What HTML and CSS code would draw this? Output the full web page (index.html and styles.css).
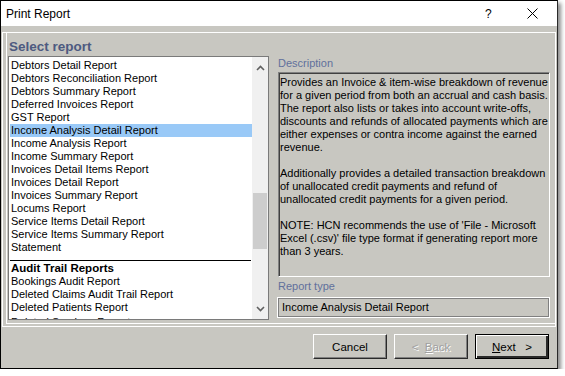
FILE: index.html
```html
<!DOCTYPE html>
<html lang="en">
<head>
    <meta charset="UTF-8">
    <title>Print Report</title>
    <link rel="stylesheet" href="styles.css">
</head>
<body>
    <div class="window">
        <div class="titlebar">
            <span class="title">Print Report</span>
            <span class="help">?</span>
            <span class="close">
                <svg width="11" height="11" viewBox="0 0 11 11"><path d="M0.5 0.5 L10.5 10.5 M10.5 0.5 L0.5 10.5" stroke="#000" stroke-width="1" fill="none"/></svg>
            </span>
        </div>
        <div class="main">
            <div class="panel">
                <div class="left">
                    <h2 class="heading">Select report</h2>
                    <div class="listbox">
                        <ul class="items">
                            <li>Debtors Detail Report</li>
                            <li>Debtors Reconciliation Report</li>
                            <li>Debtors Summary Report</li>
                            <li>Deferred Invoices Report</li>
                            <li>GST Report</li>
                            <li class="selected">Income Analysis Detail Report</li>
                            <li>Income Analysis Report</li>
                            <li>Income Summary Report</li>
                            <li>Invoices Detail Items Report</li>
                            <li>Invoices Detail Report</li>
                            <li>Invoices Summary Report</li>
                            <li>Locums Report</li>
                            <li>Service Items Detail Report</li>
                            <li>Service Items Summary Report</li>
                            <li>Statement</li>
                            <li class="separator"></li>
                            <li class="group">Audit Trail Reports</li>
                            <li>Bookings Audit Report</li>
                            <li>Deleted Claims Audit Trail Report</li>
                            <li>Deleted Patients Report</li>
                            <li class="cut">Deleted Services Report</li>
                        </ul>
                        <div class="scrollbar">
                            <span class="arrow">
                                <svg width="9" height="6" viewBox="0 0 9 6"><path d="M1 5 L4.5 1.5 L8 5" stroke="#606060" stroke-width="1.6" fill="none"/></svg>
                            </span>
                            <div class="track">
                                <div class="thumb"></div>
                            </div>
                            <span class="arrow">
                                <svg width="9" height="6" viewBox="0 0 9 6"><path d="M1 1 L4.5 4.5 L8 1" stroke="#606060" stroke-width="1.6" fill="none"/></svg>
                            </span>
                        </div>
                    </div>
                </div>
                <div class="right">
                    <div class="label label-desc">Description</div>
                    <div class="description">
                        Provides an Invoice &amp; item-wise breakdown of revenue<br>
                        for a given period from both an accrual and cash basis.<br>
                        The report also lists or takes into account write-offs,<br>
                        discounts and refunds of allocated payments which are<br>
                        either expenses or contra income against the earned<br>
                        revenue.<br>
                        <br>
                        Additionally provides a detailed transaction breakdown<br>
                        of unallocated credit payments and refund of<br>
                        unallocated credit payments for a given period.<br>
                        <br>
                        NOTE: HCN recommends the use of 'File - Microsoft<br>
                        Excel (.csv)' file type format if generating report more<br>
                        than 3 years.
                    </div>
                    <div class="label label-type">Report type</div>
                    <div class="report-type">Income Analysis Detail Report</div>
                </div>
            </div>
            <div class="footer">
                <button type="button" class="btn">Cancel</button>
                <button type="button" class="btn disabled">&lt;&nbsp;&nbsp;<u>B</u>ack</button>
                <button type="button" class="btn default"><u>N</u>ext&nbsp;&nbsp;&nbsp;&gt;</button>
            </div>
        </div>
    </div>
</body>
</html>
```

FILE: styles.css
```css
body {
    margin: 0;
    padding: 0;
    background: #fff;
    font-family: 'Liberation Sans', Arial, sans-serif;
}
.window {
    box-sizing: border-box;
    width: 558px;
    height: 369px;
    border: 1px solid #000;
    border-right-color: #2a2a2a;
    background: #c8c7c1;
    box-shadow: 3px 3px 4px rgba(0, 0, 0, 0.45);
}
.titlebar {
    height: 25px;
    background: #fff;
    display: flex;
    align-items: center;
    padding-left: 5px;
    font-size: 12px;
    color: #000;
}
.title {
    flex: 1;
}
.help {
    width: 10px;
    margin-right: 32px;
}
.close {
    display: flex;
    width: 11px;
    margin-right: 19px;
}
.main {
    padding: 6px 1px 0 1px;
}
.panel {
    height: 281px;
    border: 1px solid #fff;
    box-shadow: inset 3px -2px 0 #c8c7c1, inset 4px -3px 0 #fff;
    display: grid;
    grid-template-columns: 261px 273px;
    column-gap: 8px;
    padding: 6px 6px 6px 5px;
}
.heading {
    margin: 0 0 0 1px;
    height: 17px;
    line-height: 16px;
    font-size: 13.5px;
    font-weight: bold;
    color: #4d5a80;
}
.listbox {
    height: 262px;
    border: 1px solid #7a7a7a;
    background: #fff;
    display: flex;
    overflow: hidden;
}
.items {
    flex: 1;
    list-style: none;
    margin: 0;
    padding: 2px 0 0 1px;
    font-size: 11px;
    color: #000;
    overflow: hidden;
}
.items li {
    height: 13px;
    line-height: 13px;
    padding-left: 1px;
    white-space: nowrap;
}
.items li.selected {
    background: #99c9f7;
}
.items li.separator {
    height: 7px;
    border-bottom: 1px solid #000;
    margin-right: 1px;
    box-sizing: border-box;
}
.items li.group {
    height: 14px;
    line-height: 14px;
    font-size: 11.5px;
    font-weight: bold;
}
.items li.cut {
    line-height: 17px;
}
.scrollbar {
    width: 16px;
    flex: none;
    background: #f0f0f0;
    display: flex;
    flex-direction: column;
}
.arrow {
    height: 17px;
    display: flex;
    align-items: center;
    justify-content: center;
    padding-top: 2px;
}
.arrow:last-child {
    padding-top: 0;
    padding-bottom: 2px;
}
.track {
    flex: 1;
    padding-top: 117px;
}
.thumb {
    height: 56px;
    margin: 0 1px;
    background: #cdcdcd;
}
.right {
    display: flex;
    flex-direction: column;
}
.label {
    height: 13px;
    line-height: 13px;
    font-size: 11px;
    color: #61709c;
    padding-left: 1px;
}
.label-desc {
    margin-top: 18px;
}
.description {
    height: 200px;
    margin: 2px 0 0 1px;
    padding: 3px 1px 0 1px;
    border: 1px solid;
    border-color: #808080 #fff #fff #808080;
    box-shadow: inset 1px 1px 0 #404040;
    font-size: 11px;
    line-height: 13px;
    color: #000;
    white-space: nowrap;
    overflow: hidden;
}
.label-type {
    margin-top: 3px;
}
.report-type {
    height: 19px;
    margin-top: 4px;
    line-height: 19px;
    padding-left: 4px;
    border: 1px solid #fff;
    box-shadow: inset 1px 1px 0 #808080, inset -1px -1px 0 #808080;
    font-size: 11px;
    color: #000;
}
.footer {
    height: 34px;
    display: flex;
    justify-content: flex-end;
    align-items: flex-start;
    gap: 7px;
    padding: 7px 7px 0 0;
}
.btn {
    width: 74px;
    height: 25px;
    margin: 0;
    padding: 0;
    background: #c8c7c1;
    border: 1px solid;
    border-color: #fff #2a2a2a #2a2a2a #fff;
    box-shadow: inset -1px -1px 0 #808080;
    font-family: 'Liberation Sans', Arial, sans-serif;
    font-size: 11.5px;
    color: #000;
}
.btn.disabled {
    color: #a0a0a0;
    text-shadow: 1px 1px 0 #fff;
}
.btn.default {
    border: 1px solid #000;
    box-shadow: inset 1px 1px 0 #fff, inset -2px -2px 0 #2a2a2a;
}
```
